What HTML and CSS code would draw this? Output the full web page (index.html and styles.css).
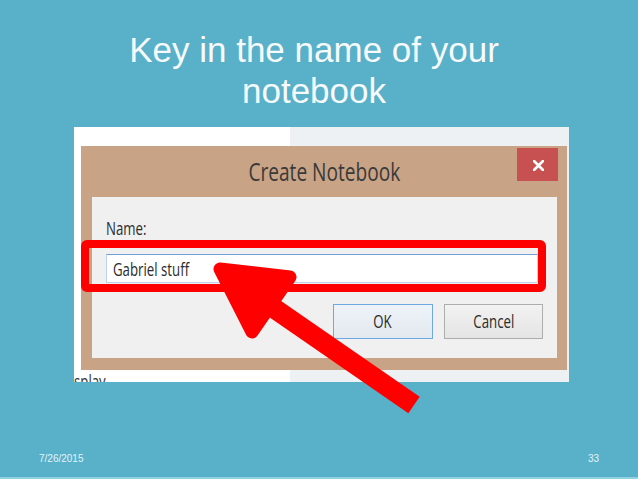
FILE: index.html
```html
<!DOCTYPE html>
<html>
<head>
<meta charset="utf-8">
<link rel="stylesheet" href="styles.css">
</head>
<body>
<div class="slide">
  <h1 class="title">Key in the name of your<br>notebook</h1>
  <div class="shot">
    <div class="dialog">
      <div class="titlebar">
        <span></span>
        <span class="dtitle"><span class="sq center">Create Notebook</span></span>
        <span class="close-wrap">
          <span class="close">
            <svg width="11" height="11" viewBox="0 0 11 11"><path d="M1 1 L10 10 M10 1 L1 10" stroke="#fff" stroke-width="2.6" stroke-linecap="round"/></svg>
          </span>
        </span>
      </div>
      <div class="content">
        <div class="label"><span class="sq">Name:</span></div>
        <div class="input"><span class="sq">Gabriel stuff</span></div>
        <div class="buttons">
          <div class="btn ok"><span class="sq center">OK</span></div>
          <div class="btn cancel"><span class="sq center">Cancel</span></div>
        </div>
      </div>
    </div>
    <div class="splay"><span class="sq">splay</span></div>
  </div>
  <div class="footer">
    <span>7/26/2015</span>
    <span>33</span>
  </div>
  <div class="highlight"></div>
  <svg class="arrow" width="638" height="479" viewBox="0 0 638 479">
    <line x1="262" y1="300" x2="414" y2="405" stroke="#fe0000" stroke-width="20"/>
    <polygon points="220,269 290,277 252,332" fill="#fe0000" stroke="#fe0000" stroke-width="13" stroke-linejoin="round"/>
  </svg>
</div>
</body>
</html>
```

FILE: styles.css
```css
html, body {
  margin: 0;
  padding: 0;
}
body {
  background: #58b0c9;
}
.slide {
  position: relative;
  width: 638px;
  height: 479px;
  box-sizing: border-box;
  background: #58b0c9;
  border-bottom: 2px solid #8fd1e2;
  overflow: hidden;
}
.title {
  margin: 29px 0 0 0;
  padding-right: 10px;
  font-family: "Liberation Sans", Arial, sans-serif;
  font-weight: normal;
  font-size: 35px;
  line-height: 41px;
  color: #f6fafb;
  text-align: center;
}
.shot {
  margin: 16px 0 0 74px;
  width: 495px;
  height: 255px;
  background: linear-gradient(to right, #ffffff 0, #ffffff 216px, #eef1f3 216px, #eef1f3 100%);
  overflow: hidden;
  font-family: "Open Sans", sans-serif;
}
.sq {
  display: inline-block;
  transform: scaleX(0.735);
  transform-origin: left center;
  white-space: nowrap;
}
.sq.center {
  transform-origin: center center;
}
.dialog {
  margin: 19px 0 0 7px;
  width: 486px;
  height: 224px;
  background: #c9a385;
  display: flex;
  flex-direction: column;
}
.titlebar {
  height: 51px;
  display: grid;
  grid-template-columns: 1fr auto 1fr;
}
.dtitle {
  font-size: 26px;
  line-height: 51px;
  color: #3a3a3a;
  text-align: center;
}
.close-wrap {
  display: flex;
  justify-content: flex-end;
  align-items: flex-start;
}
.close {
  margin: 2px 9px 0 0;
  width: 41px;
  height: 33px;
  background: #c75050;
  display: flex;
  align-items: center;
  justify-content: center;
}
.close svg {
  display: block;
  margin: 1px 0 0 2px;
}
.content {
  margin: 0 10px 12px 11px;
  flex: 1;
  background: #f0f0f0;
  padding: 21px 14px 0 14px;
  color: #2b2b2b;
  font-size: 18px;
}
.label {
  line-height: 20px;
  height: 20px;
}
.input {
  margin: 16px 5px 0 0;
  height: 29px;
  box-sizing: border-box;
  background: #ffffff;
  border: 1px solid #bcd2ea;
  border-top-color: #6f9fd3;
  padding: 1px 0 0 6px;
  line-height: 26px;
}
.buttons {
  margin-top: 21px;
  display: flex;
  justify-content: flex-end;
  gap: 11px;
}
.btn {
  height: 35px;
  box-sizing: border-box;
  line-height: 33px;
  text-align: center;
  background: linear-gradient(#f2f2f2, #e4e4e4);
  border: 1px solid #adadad;
}
.btn.ok {
  width: 100px;
  border-color: #6ea9e4;
  background: linear-gradient(#eef3f8, #e3e9ef);
}
.btn.cancel {
  width: 99px;
}
.splay {
  margin-top: 1px;
  font-size: 18px;
  line-height: 20px;
  color: #333;
}
.footer {
  margin-top: 71px;
  padding: 0 39px;
  display: flex;
  justify-content: space-between;
  font-family: "Liberation Sans", Arial, sans-serif;
  font-size: 10px;
  line-height: 12px;
  color: #e3f3f8;
}
.highlight {
  position: absolute;
  left: 81px;
  top: 240px;
  width: 465px;
  height: 52px;
  box-sizing: border-box;
  border: 8px solid #fe0000;
  border-radius: 6px;
}
.arrow {
  position: absolute;
  left: 0;
  top: 0;
  pointer-events: none;
}
```
